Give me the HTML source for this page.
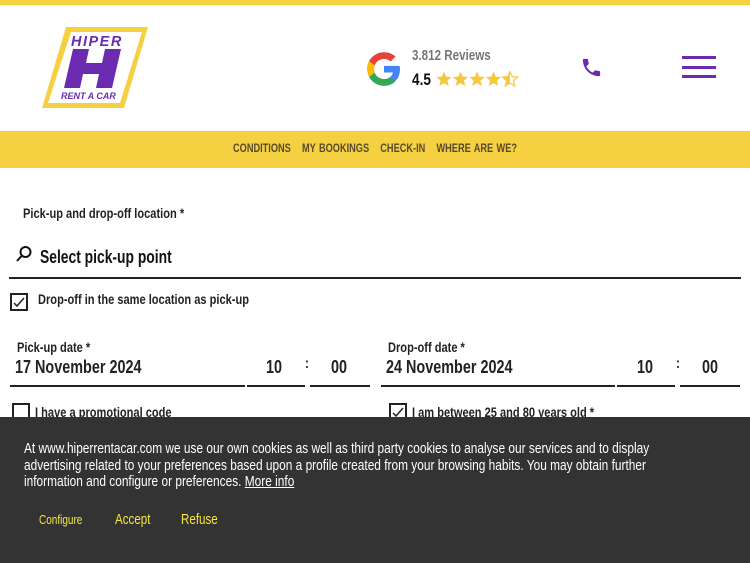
<!DOCTYPE html>
<html><head><meta charset="utf-8">
<style>
*{margin:0;padding:0;box-sizing:border-box}
body{width:750px;height:563px;overflow:hidden;background:#fff;font-family:"Liberation Sans",sans-serif;color:#222;position:relative}
.a{position:absolute}
.t{transform:scaleX(.8);transform-origin:left top;white-space:nowrap}
.topbar{left:0;top:0;width:750px;height:5px;background:#f5d142}
.nav{left:0;top:131px;width:750px;height:37px;background:#f5d142}
.navin{position:absolute;left:0;top:12px;width:750px;text-align:center;font-size:11.5px;font-weight:bold;color:#5a4a2a;transform:scaleX(.8);transform-origin:375px 0;word-spacing:1px}
.navin span{margin:0 7px}
.lbl{font-size:13.5px;font-weight:bold;color:#222;transform:scaleX(.82)}
.line{height:2px;background:#222}
.cb{width:18px;height:18px;border:2px solid #222;background:#fff}
.banner{left:0;top:417px;width:750px;height:146px;background:#333;color:#fff}
.big{font-size:18px;font-weight:bold;color:#222}
</style></head><body>
<div class="a topbar"></div>
<svg class="a" style="left:40px;top:26px" width="110" height="84" viewBox="0 0 110 84">
<polygon points="26,1 108,1 84,82 2,82" fill="#f5d142"/>
<polygon points="31,6 102,6 80,77 8,77" fill="#fff"/>
<text x="31" y="20" font-family="Liberation Sans" font-weight="bold" font-style="italic" font-size="14.5" fill="#6a2bb0" letter-spacing="1.5">HIPER</text>
<polygon points="33,23 49,23 46,37 62,37 65,23 81,23 72,62 56,62 59,48 43,48 40,62 24,62" fill="#6a2bb0"/>
<text x="21" y="73" font-family="Liberation Sans" font-weight="bold" font-style="italic" font-size="9" fill="#6a2bb0">RENT A CAR</text>
</svg>
<svg class="a" style="left:365px;top:50px" width="38" height="38" viewBox="0 0 48 48">
<path d="M43.6 20H24v8.4h11.3C34.2 33.6 29.6 36.8 24 36.8c-7.1 0-12.8-5.7-12.8-12.8S16.9 11.2 24 11.2c3.2 0 6.1 1.2 8.4 3.1l6.1-6.1C34.6 4.8 29.6 2.8 24 2.8 12.3 2.8 2.8 12.3 2.8 24S12.3 45.2 24 45.2c11 0 20.2-8 20.2-21.2 0-1.4-.2-2.7-.6-4z" fill="#4285f4"/>
<path d="M5.3 14.1l7 5.1C14.2 14.6 18.7 11.2 24 11.2c3.2 0 6.1 1.2 8.4 3.1l6.1-6.1C34.6 4.8 29.6 2.8 24 2.8 15.9 2.8 8.9 7.4 5.3 14.1z" fill="#ea4335"/>
<path d="M24 45.2c5.5 0 10.4-1.9 14.1-5.2l-6.6-5.5c-2 1.5-4.6 2.3-7.5 2.3-5.5 0-10.2-3.5-12-8.5l-7 5.4C8.6 40.5 15.7 45.2 24 45.2z" fill="#34a853"/>
<path d="M5.3 14.1C3.7 17 2.8 20.4 2.8 24s.9 7 2.5 9.9l7-5.4c-.5-1.4-.8-2.9-.8-4.5s.3-3.1.8-4.5z" fill="#fbbc05"/>
</svg>
<div class="a t" style="left:412px;top:48px;font-size:14.5px;font-weight:bold;color:#777">3.812 Reviews</div>
<div class="a t" style="left:412px;top:70px;font-size:17px;font-weight:bold;color:#111">4.5</div>
<svg class="a" style="left:436px;top:71px" width="84" height="17" viewBox="0 0 84 17">
<defs><polygon id="s" points="8,0.5 10.2,5.6 15.6,6 11.5,9.6 12.8,15 8,12.1 3.2,15 4.5,9.6 0.4,6 5.8,5.6"/></defs>
<use href="#s" x="0" fill="#f5c842"/><use href="#s" x="16.5" fill="#f5c842"/><use href="#s" x="33" fill="#f5c842"/><use href="#s" x="49.5" fill="#f5c842"/>
<use href="#s" x="66" fill="none" stroke="#f5c842" stroke-width="1.2"/>
<polygon points="74,0.5 74,12.1 69.2,15 70.5,9.6 66.4,6 71.8,5.6" fill="#f5c842"/>
</svg>
<svg class="a" style="left:580px;top:56px" width="23" height="23" viewBox="0 0 24 24"><path d="M6.6 10.8c1.4 2.8 3.8 5.1 6.6 6.6l2.2-2.2c.3-.3.7-.4 1-.2 1.1.4 2.3.6 3.6.6.6 0 1 .4 1 1V20c0 .6-.4 1-1 1C10.6 21 3 13.4 3 4c0-.6.4-1 1-1h3.5c.6 0 1 .4 1 1 0 1.3.2 2.5.6 3.6.1.3 0 .7-.2 1z" fill="#6a2bb0"/></svg>
<div class="a" style="left:682px;top:56px;width:34px;height:3px;background:#6a2bb0"></div>
<div class="a" style="left:682px;top:66px;width:34px;height:3px;background:#6a2bb0"></div>
<div class="a" style="left:682px;top:75px;width:34px;height:3px;background:#6a2bb0"></div>
<div class="a nav"><div class="navin"><span>CONDITIONS</span><span>MY BOOKINGS</span><span>CHECK-IN</span><span>WHERE ARE WE?</span></div></div>
<div class="a lbl t" style="left:23px;top:206px">Pick-up and drop-off location *</div>
<svg class="a" style="left:15px;top:245px" width="18" height="18" viewBox="0 0 18 18"><circle cx="10.5" cy="7" r="5" fill="none" stroke="#111" stroke-width="2"/><line x1="7" y1="10.5" x2="2" y2="16" stroke="#111" stroke-width="2"/></svg>
<div class="a t" style="left:40px;top:247px;font-size:18px;font-weight:bold;color:#111;transform:scaleX(.77)">Select pick-up point</div>
<div class="a line" style="left:9px;top:277px;width:732px"></div>
<div class="a cb" style="left:10px;top:293px"></div>
<svg class="a" style="left:12px;top:295px" width="14" height="14" viewBox="0 0 14 14"><path d="M2 8l3 3 7-8" fill="none" stroke="#222" stroke-width="1.5"/></svg>
<div class="a lbl t" style="left:38px;top:292px">Drop-off in the same location as pick-up</div>
<div class="a lbl t" style="left:17px;top:340px">Pick-up date *</div>
<div class="a big t" style="left:15px;top:357px">17 November 2024</div>
<div class="a big t" style="left:266px;top:357px">10</div>
<div class="a big t" style="left:305px;top:355px;font-size:15px">:</div>
<div class="a big t" style="left:331px;top:357px">00</div>
<div class="a line" style="left:10px;top:385px;width:235px"></div>
<div class="a line" style="left:247px;top:385px;width:58px"></div>
<div class="a line" style="left:310px;top:385px;width:60px"></div>
<div class="a lbl t" style="left:388px;top:340px">Drop-off date *</div>
<div class="a big t" style="left:386px;top:357px">24 November 2024</div>
<div class="a big t" style="left:637px;top:357px">10</div>
<div class="a big t" style="left:676px;top:355px;font-size:15px">:</div>
<div class="a big t" style="left:702px;top:357px">00</div>
<div class="a line" style="left:381px;top:385px;width:234px"></div>
<div class="a line" style="left:617px;top:385px;width:58px"></div>
<div class="a line" style="left:680px;top:385px;width:60px"></div>
<div class="a cb" style="left:12px;top:403px"></div>
<div class="a lbl t" style="left:35px;top:405px">I have a promotional code</div>
<div class="a cb" style="left:389px;top:403px"></div>
<svg class="a" style="left:391px;top:405px" width="14" height="14" viewBox="0 0 14 14"><path d="M2 8l3 3 7-8" fill="none" stroke="#222" stroke-width="1.5"/></svg>
<div class="a lbl t" style="left:412px;top:405px">I am between 25 and 80 years old *</div>
<div class="a banner">
<div style="position:absolute;left:24px;top:24px;width:815px;font-size:14.5px;line-height:16.5px;transform:scaleX(.82);transform-origin:left top">At www.hiperrentacar.com we use our own cookies as well as third party cookies to analyse our services and to display advertising related to your preferences based upon a profile created from your browsing habits. You may obtain further information and configure or preferences. <u>More info</u></div>
<div class="t" style="position:absolute;left:39px;top:96px;font-size:12.5px;color:#f5e642">Configure</div>
<div class="t" style="position:absolute;left:115px;top:95px;font-size:14.5px;color:#f5e642">Accept</div>
<div class="t" style="position:absolute;left:181px;top:95px;font-size:14.5px;color:#f5e642">Refuse</div>
</div>
</body></html>
